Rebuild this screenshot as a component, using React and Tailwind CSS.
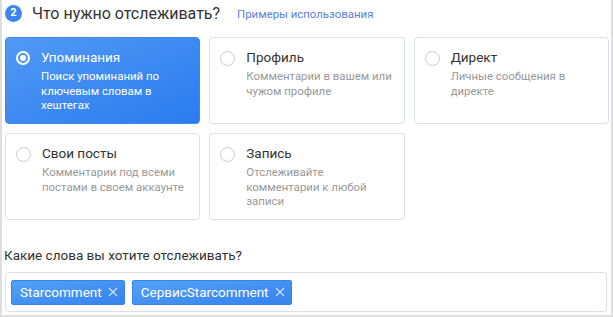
import React from 'react';

const options = [
  { title: 'Упоминания', desc: 'Поиск упоминаний по ключевым словам в хештегах', active: true },
  { title: 'Профиль', desc: 'Комментарии в вашем или чужом профиле' },
  { title: 'Директ', desc: 'Личные сообщения в директе' },
  { title: 'Свои посты', desc: 'Комментарии под всеми постами в своем аккаунте' },
  { title: 'Запись', desc: 'Отслеживайте комментарии к любой записи' },
];

const tags = ['Starcomment', 'СервисStarcomment'];

function Option({ title, desc, active }) {
  return (
    <div
      className={
        active
          ? 'h-[87px] rounded-[4px] border border-[#3d87ee] bg-gradient-to-br from-[#5199f4] to-[#2a7bef] pl-[10px] pr-[6px] pt-[11px] text-white'
          : 'h-[87px] rounded-[4px] border border-[#dcdfe6] bg-white pl-[10px] pr-[6px] pt-[11px]'
      }
    >
      <div className="flex items-start gap-[11px]">
        {active ? (
          <span className="mt-[2px] flex h-[14px] w-[14px] shrink-0 items-center justify-center rounded-full border-[2px] border-white">
            <span className="h-[6px] w-[6px] rounded-full bg-white" />
          </span>
        ) : (
          <span className="mt-[2px] h-[15px] w-[15px] shrink-0 rounded-full border border-[#c8ccd4] bg-white" />
        )}
        <div>
          <div className={active ? 'text-[13.5px] leading-[17px] text-white' : 'text-[13.5px] leading-[17px] text-[#333]'}>
            {title}
          </div>
          <div
            className={
              active
                ? 'mt-[3px] text-[11.4px] leading-[14.5px] text-white'
                : 'mt-[3px] text-[11.4px] leading-[14.5px] text-[#999]'
            }
          >
            {desc}
          </div>
        </div>
      </div>
    </div>
  );
}

export default function App() {
  return (
    <div
      className="h-[317px] w-[613px] border-x-2 border-b-2 border-[#dedede] bg-white"
      style={{ fontFamily: 'Roboto, "Liberation Sans", sans-serif' }}
    >
      {/* Header */}
      <div className="flex h-[37px] items-start pl-[3px] pt-[5px]">
        <span className="flex h-[17px] w-[17px] items-center justify-center rounded-full bg-[#3b86ef] text-[11px] font-bold text-white">
          2
        </span>
        <span className="ml-[10px] text-[16px] leading-[17px] text-[#333]">Что нужно отслеживать?</span>
        <span className="ml-[17px] mt-[2px] text-[11.4px] leading-[14px] text-[#5a7fdc]">Примеры использования</span>
      </div>

      {/* Options */}
      <div className="ml-[3px] mr-[2px] grid grid-cols-3 gap-x-[9px] gap-y-[9px]">
        {options.map((o) => (
          <Option key={o.title} {...o} />
        ))}
      </div>

      {/* Words */}
      <div className="mt-[26px] pl-[2px] text-[13.5px] leading-[18px] text-[#333]">
        Какие слова вы хотите отслеживать?
      </div>
      <div className="ml-[3px] mr-[4px] mt-[8px] flex h-[40px] items-center gap-[7px] rounded-[4px] border border-[#dcdfe6] px-[5px]">
        {tags.map((t) => (
          <span
            key={t}
            className="flex h-[25px] items-center gap-[6px] rounded-[2px] border border-[#3a83e6] bg-gradient-to-br from-[#55a0f6] to-[#3583ee] pl-[8px] pr-[6px] text-[13.5px] text-white"
          >
            {t}
            <svg width="10" height="10" viewBox="0 0 10 10" className="shrink-0">
              <path d="M1 1 L9 9 M9 1 L1 9" stroke="#d3e5fd" strokeWidth="1.1" fill="none" />
            </svg>
          </span>
        ))}
      </div>
    </div>
  );
}
